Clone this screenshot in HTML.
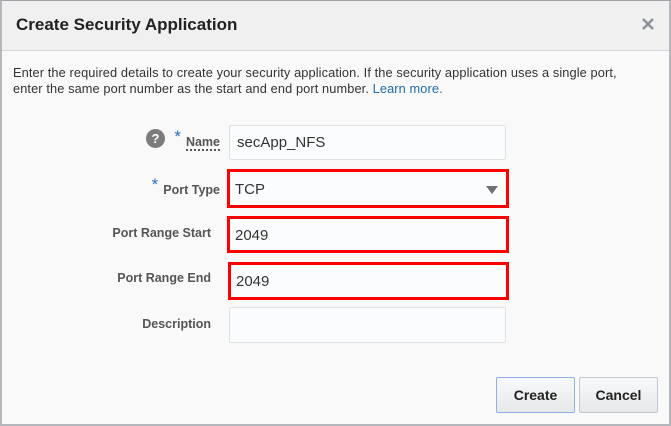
<!DOCTYPE html>
<html><head><style>
*{margin:0;padding:0;box-sizing:border-box}
html,body{width:671px;height:426px;overflow:hidden;background:#fafafa;font-family:"Liberation Sans",Arial,sans-serif}
.frame{position:absolute;left:0;top:0;width:671px;height:426px;border:2px solid #b4b8bd;border-top:1px solid #a0a4a8;background:#f9f9f9}
.hdr{position:absolute;left:0;top:0;width:667px;height:50px;background:#f0f0f0;border-bottom:1px solid #d4d7da}
.title{position:absolute;left:14px;top:14px;font-size:17px;font-weight:bold;color:#222}
.x{position:absolute;left:640px;top:17px;width:12px;height:12px}
.desc{position:absolute;left:11px;top:64px;font-size:12.8px;line-height:15.5px;color:#333;width:660px;white-space:nowrap;letter-spacing:0.1px}
.desc a{color:#1f6bab;text-decoration:none}
.lbl{position:absolute;right:458px;font-size:12.5px;font-weight:bold;color:#555;text-align:right;white-space:nowrap}
.star{color:#2a6fbf;font-weight:normal;font-size:17px;position:relative;top:-4px;margin-right:5px}
.in{position:absolute;background:#fbfcfd;border:1px solid #dfe1e3;border-radius:2px;font-size:15px;color:#333;padding-left:7px}
.red{border:3px solid #f00;border-radius:0;padding-left:5px}
.btn{position:absolute;top:376px;height:36px;border:1px solid #c4c8cc;border-radius:2px;background:linear-gradient(#f8f9fa,#e6e8ea);font-size:14px;font-weight:bold;color:#222;text-align:center;line-height:34px}
</style></head><body>
<div class="frame">
<div class="hdr"><div class="title">Create Security Application</div>
<svg class="x" viewBox="0 0 12 12"><path d="M1 1L11 11M11 1L1 11" stroke="#8a9099" stroke-width="2.4"/></svg></div>
<div class="desc">Enter the required details to create your security application. If the security application uses a single port,<br>enter the same port number as the start and end port number. <a>Learn more.</a></div>

<div style="position:absolute;left:144px;top:128px;width:19px;height:19px;border-radius:50%;background:#7c7c7c;color:#fff;font-size:13px;font-weight:bold;text-align:center;line-height:19px">?</div>
<div class="lbl" style="top:130px;right:449px"><span class="star">*</span><span style="border-bottom:2px dotted #555">Name</span></div>
<div class="in" style="left:227px;top:124px;width:277px;height:35px;line-height:33px">secApp_NFS</div>

<div class="lbl" style="top:178px;right:449px"><span class="star">*</span>Port Type</div>
<div class="in red" style="left:225px;top:168px;width:282px;height:39px;line-height:35px">TCP
<svg style="position:absolute;right:8px;top:14px" width="12" height="8" viewBox="0 0 12 8"><path d="M0 0H12L6 8Z" fill="#707070"/></svg></div>

<div class="lbl" style="top:225px">Port Range Start</div>
<div class="in red" style="left:225px;top:215px;width:282px;height:37px;line-height:33px">2049</div>

<div class="lbl" style="top:270px">Port Range End</div>
<div class="in red" style="left:226px;top:261px;width:281px;height:38px;line-height:34px">2049</div>

<div class="lbl" style="top:316px">Description</div>
<div class="in" style="left:227px;top:306px;width:277px;height:36px"></div>

<div class="btn" style="left:494px;width:79px;border-color:#8fb0e0">Create</div>
<div class="btn" style="left:577px;width:79px">Cancel</div>
</div>
</body></html>
